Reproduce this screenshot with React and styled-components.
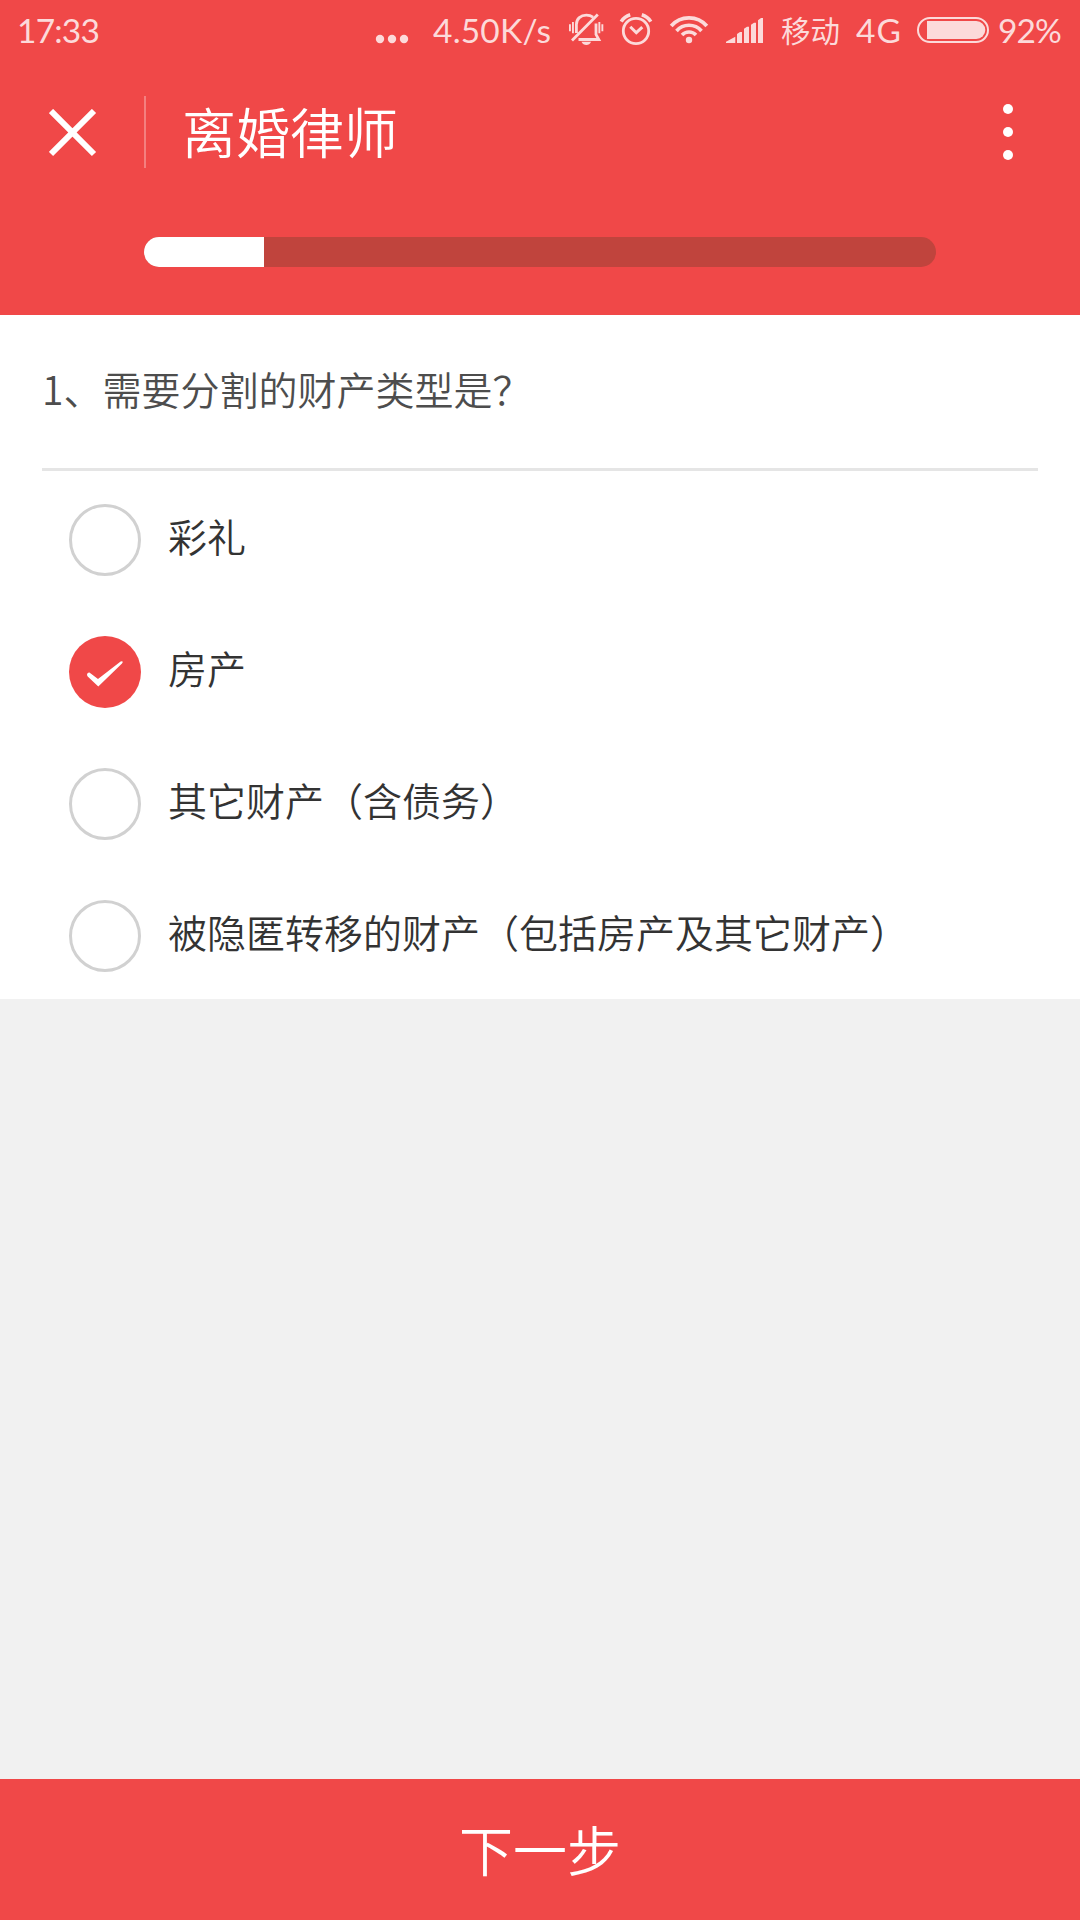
import { useState } from "react";
import styled, { createGlobalStyle } from "styled-components";

const OPTIONS = [
  "彩礼",
  "房产",
  "其它财产（含债务）",
  "被隐匿转移的财产（包括房产及其它财产）",
];

function StatusBar() {
  return (
    <Status>
      <StatusText $width={90} $spacing={-0.8}>
        17:33
      </StatusText>
      <StatusIcons>
        <StatusIcon width="35" viewBox="0 0 35 60">
          <circle cx="5" cy="39" r="4.2" />
          <circle cx="17" cy="39" r="4.2" />
          <circle cx="29" cy="39" r="4.2" />
        </StatusIcon>
        <StatusText $gap={23} $width={120} $spacing={0.2}>
          4.50K/s
        </StatusText>
        <StatusIcon $gap={15} width="37" viewBox="0 0 37 60">
          <path d="M1 24.3h1.9v7H1zM4 22h1.9v11.3H4zM30.4 22h1.9v11.3h-1.9zM33.4 24.3h1.9v7h-1.9z" />
          <path d="M13.5 41.7h9.6q-1.6 3.2-4.8 3.2t-4.8-3.2z" />
          <Line
            d="M8.4 33v-8.4c0-6 4.4-9.4 10-9.4 2.6 0 4.8.7 6.6 2M28 23.5v11l2.8 5H10.5M4 40.6 29.8 14.6"
            $stroke={2.8}
          />
        </StatusIcon>
        <StatusIcon $gap={14} width="34" viewBox="0 0 34 60">
          <Line as="circle" cx="17" cy="31" r="12.7" $stroke={2.8} />
          <Line d="m11.3 26.7 6 6 6-5.6" $stroke={3} />
          <Line d="M2.2 21.6q3.2-5 9-6.8M31.8 21.6q-3.2-5-9-6.8" $stroke={3.6} />
        </StatusIcon>
        <StatusIcon $gap={16} width="40" viewBox="0 0 40 60">
          <circle cx="20" cy="40" r="3.2" />
          <Line d="M2.2 26a23.6 23.6 0 0 1 35.6 0" $stroke={3.8} />
          <Line d="M7.5 31a16.6 16.6 0 0 1 25 0" $stroke={3.6} />
          <Line d="M13 35a9.6 9.6 0 0 1 14 0" $stroke={3.5} />
        </StatusIcon>
        <StatusIcon $gap={16} width="39" viewBox="0 0 39 60">
          <path d="M1 43v-1.3l9.3-5V43zM12 43v-9l3-2h2v11zM19 43V28.8l3-2h2V43zM26 43V24.8l3-2h2V43zM33 43V20.2l3-2.2h2v25z" />
        </StatusIcon>
        <Carrier>移动</Carrier>
        <StatusText $gap={15} $width={47} $spacing={1}>
          4G
        </StatusText>
        <StatusIcon $gap={13} width="74" viewBox="0 0 74 60">
          <Line as="rect" x="2" y="18" width="70" height="24" rx="12" $stroke={2} />
          <path d="M11 21h49.3a9 9 0 0 1 0 18H11z" />
        </StatusIcon>
        <StatusText $gap={8} $width={82} $spacing={-0.9}>
          92%
        </StatusText>
      </StatusIcons>
    </Status>
  );
}

function App() {
  const [selected, setSelected] = useState(1);

  return (
    <Page>
      <GlobalStyle />
      <Header>
        <StatusBar />
        <TitleBar>
          <CloseButton aria-label="关闭">
            <svg width="48" height="48" viewBox="0 0 48 48">
              <path
                d="M2 2 45 45M45 2 2 45"
                stroke="#fff"
                strokeWidth="6"
              />
            </svg>
          </CloseButton>
          <Title>离婚律师</Title>
          <MoreButton aria-label="更多">
            <Dot />
            <Dot />
            <Dot />
          </MoreButton>
        </TitleBar>
        <Track>
          <Progress style={{ width: 120 }} />
        </Track>
      </Header>
      <Card>
        <Question>1、需要分割的财产类型是？</Question>
        {OPTIONS.map((el, idx) => {
          return (
            <Option key={idx} onClick={() => setSelected(idx)}>
              <Radio $checked={selected === idx}>
                {selected === idx && (
                  <svg width="72" height="72" viewBox="0 0 72 72">
                    <path
                      d="M18 38.6q.4-2.2 2.4-2L29 43l22.6-17.4q1.6-1 2.2.2 0 .8-.8 1.6L29.3 50.6 18.7 40.4q-.7-.8-.7-1.8z"
                      fill="#fff"
                    />
                  </svg>
                )}
              </Radio>
              <Label>{el}</Label>
            </Option>
          );
        })}
      </Card>
      <NextButton>下一步</NextButton>
    </Page>
  );
}

export default App;

const GlobalStyle = createGlobalStyle`
  * {
    box-sizing: border-box;
  }

  body {
    margin: 0;
    font-family: "Noto Sans CJK SC", sans-serif;
    font-weight: 350;
  }

  button {
    border: 0;
    padding: 0;
    background: none;
    font-family: inherit;
    font-weight: inherit;
    color: inherit;
  }
`;

const Page = styled.div`
  display: flex;
  flex-direction: column;
  width: 1080px;
  height: 1920px;
  overflow: hidden;
  background: #f1f1f1;
`;

const Header = styled.header`
  height: 315px;
  background: #f04848;
  color: #fff;
`;

const Status = styled.div`
  display: flex;
  justify-content: space-between;
  height: 60px;
  padding-left: 17px;
  color: #fcdada;
`;

const StatusIcons = styled.div`
  display: flex;
`;

const StatusText = styled.span`
  width: ${({ $width }) => $width}px;
  margin-left: ${({ $gap = 0 }) => $gap}px;
  font-family: Lato, sans-serif;
  font-size: 33.5px;
  font-weight: 400;
  line-height: 61px;
  letter-spacing: ${({ $spacing = 0 }) => $spacing}px;
  white-space: nowrap;
`;

const Carrier = styled.span`
  width: 60px;
  margin-left: 17px;
  font-size: 29.5px;
  font-weight: 400;
  line-height: 59px;
  white-space: nowrap;
`;

const StatusIcon = styled.svg`
  flex: none;
  height: 60px;
  margin-left: ${({ $gap = 0 }) => $gap}px;
  fill: currentColor;
`;

const Line = styled.path`
  fill: none;
  stroke: currentColor;
  stroke-width: ${({ $stroke = 2.4 }) => $stroke};
`;

const TitleBar = styled.div`
  display: flex;
  align-items: center;
  height: 144px;
`;

const CloseButton = styled.button`
  display: flex;
  align-items: center;
  justify-content: center;
  width: 146px;
  height: 72px;
  padding: 1px 0 0 1px;
  border-right: 2px solid rgba(255, 255, 255, 0.3);
`;

const Title = styled.h1`
  flex: 1;
  margin: 0;
  padding: 0 0 3px 36px;
  font-size: 54px;
  font-weight: inherit;
  line-height: 72px;
`;

const MoreButton = styled.button`
  display: flex;
  flex-direction: column;
  align-items: center;
  gap: 13px;
  width: 144px;
`;

const Dot = styled.span`
  width: 10px;
  height: 10px;
  border-radius: 50%;
  background: #fff;
`;

const Track = styled.div`
  height: 30px;
  margin: 33px 144px 0;
  border-radius: 15px;
  overflow: hidden;
  background: #c0443d;
`;

const Progress = styled.div`
  height: 100%;
  background: #fff;
`;

const Card = styled.main`
  height: 684px;
  background: #fff;
`;

const Question = styled.h2`
  height: 156px;
  margin: 0 42px;
  border-bottom: 3px solid #e5e5e5;
  color: #4d4d4d;
  font-size: 39px;
  font-weight: inherit;
  line-height: 147px;
`;

const Option = styled.div`
  display: flex;
  align-items: center;
  height: 132px;
  padding: 6px 0 0 69px;
`;

const Radio = styled.span`
  flex: none;
  width: 72px;
  height: 72px;
  border: ${({ $checked }) => ($checked ? "0" : "3px solid #d1d1d1")};
  border-radius: 50%;
  background: ${({ $checked }) => ($checked ? "#f04848" : "#fff")};
`;

const Label = styled.span`
  margin: -10px 0 0 27px;
  color: #333;
  font-size: 39px;
  line-height: 60px;
`;

const NextButton = styled.button`
  height: 141px;
  margin-top: auto;
  padding-bottom: 2px;
  background: #f04848;
  color: #fff;
  font-size: 54px;
  line-height: 139px;
`;
